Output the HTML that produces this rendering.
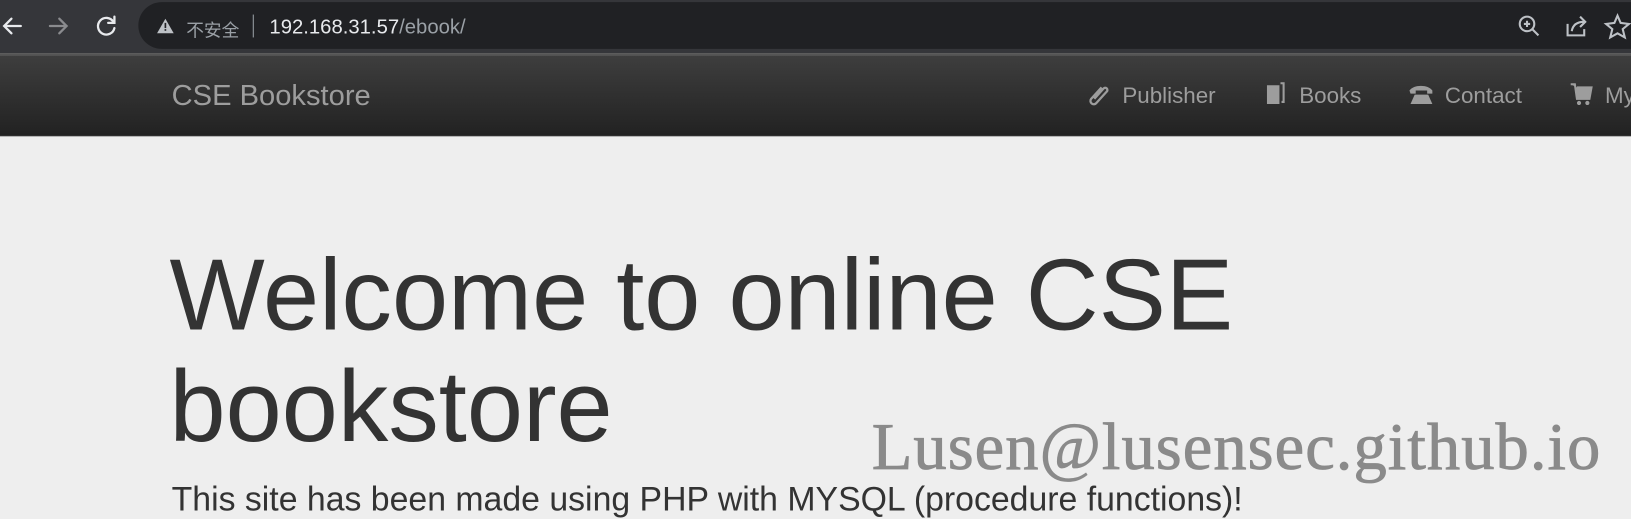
<!DOCTYPE html>
<html><head><meta charset="utf-8"><style>
body{margin:0;width:1631px;height:515px;overflow:hidden;background:#eeeeee;font-family:"Liberation Sans",sans-serif;position:relative}
#w{position:absolute;left:0;top:0;width:1568px;height:496px;transform:scale(1.0402);transform-origin:0 0}
.top{position:absolute;left:0;top:0;width:1568px;height:51px;background:#35363a}
.pill{position:absolute;left:133px;top:2px;width:1460px;height:45px;border-radius:23px;background:#202124}
.nav{position:absolute;left:0;top:51px;width:1568px;height:80px;background:linear-gradient(#3e3e3e,#222);border-top:2px solid #555;box-sizing:border-box;border-bottom:1px solid #111}
.t{position:absolute;white-space:nowrap}
.n{font-size:21.5px;color:#9d9d9d;top:80px}
</style></head><body><div id="w">
<div class="top"><div class="pill"></div>
<svg class="t" style="left:0;top:12px" width="130" height="26"><g stroke-width="2.2" fill="none" stroke-linecap="round"><path d="M20 13H4M11 6L4 13l7 7" stroke="#e8eaed"/><path d="M48 13h16M57 6l7 7-7 7" stroke="#8a8b8e"/><path d="M109 9a8 8 0 1 0 1 6" stroke="#e8eaed"/><path d="M110 4v6h-6" stroke="#e8eaed"/></g></svg>
<svg class="t" style="left:150px;top:17px" width="18" height="16"><path d="M9 1L17 15H1Z" fill="#bdc1c6"/><rect x="8.2" y="5" width="1.6" height="5" fill="#202124"/><rect x="8.2" y="11" width="1.6" height="1.6" fill="#202124"/></svg>
<div class="t" style="left:179px;top:15px;font-size:17px;color:#9aa0a6;font-family:'Liberation Sans','Noto Sans CJK SC',sans-serif">不安全</div>
<div class="t" style="left:243px;top:14px;width:1px;height:22px;background:#9aa0a6"></div>
<div class="t" style="left:259px;top:15px;font-size:19.5px;color:#e8eaed">192.168.31.57<span style="color:#9aa0a6">/ebook/</span></div>
<svg class="t" style="left:1455px;top:11px" width="120" height="28"><g fill="none" stroke="#bdc1c6" stroke-width="2"><circle cx="13" cy="12" r="7"/><path d="M18 17l6 6M10 12h6M13 9v6"/><path d="M52 12v11h16v-6"/><path d="M56 19c1-6 5-9 12-9M64 5l5 5-5 5"/><path d="M100 4l3 7 8 1-6 5 2 8-7-4-7 4 2-8-6-5 8-1z"/></g></svg>
</div>
<div class="nav"></div>
<div class="t" style="left:165px;top:76px;font-size:28px;color:#9d9d9d">CSE Bookstore</div>
<svg class="t" style="left:1043px;top:79px" width="26" height="26"><path d="M16 5L6 16a3 3 0 0 0 5 4l10-11a2 2 0 0 0-3-3L9 16" fill="none" stroke="#9d9d9d" stroke-width="2.2"/></svg>
<div class="t n" style="left:1079px">Publisher</div>
<svg class="t" style="left:1216px;top:79px" width="22" height="24"><path d="M2 3h12v18H2z" fill="#9d9d9d"/><path d="M15 1h3v18h-2" fill="none" stroke="#9d9d9d" stroke-width="2"/></svg>
<div class="t n" style="left:1249px">Books</div>
<svg class="t" style="left:1354px;top:80px" width="26" height="22"><path d="M1 7c4-6 18-6 22 0v3h-5V7H7v3H2z" fill="#9d9d9d"/><path d="M6 11h13l4 9H2z" fill="#9d9d9d"/></svg>
<div class="t n" style="left:1389px">Contact</div>
<svg class="t" style="left:1509px;top:79px" width="24" height="24"><path d="M1 2h4l2 14h12l2-11H7" fill="#9d9d9d" stroke="#9d9d9d" stroke-width="2"/><circle cx="9" cy="20" r="2" fill="#9d9d9d"/><circle cx="17" cy="20" r="2" fill="#9d9d9d"/></svg>
<div class="t n" style="left:1543px">My</div>
<div class="t" style="left:163px;top:230px;font-size:97px;color:#333;line-height:107px">Welcome to online CSE<br>bookstore</div>
<div class="t" style="left:838px;top:393px;font-size:64px;color:#8a8a8a;font-family:'Liberation Serif',serif;letter-spacing:1px;-webkit-text-stroke:0.8px #8a8a8a">Lusen@lusensec.github.io</div>
<div class="t" style="left:165px;top:462px;font-size:32.5px;color:#333">This site has been made using PHP with MYSQL (procedure functions)!</div>
</div></body></html>
